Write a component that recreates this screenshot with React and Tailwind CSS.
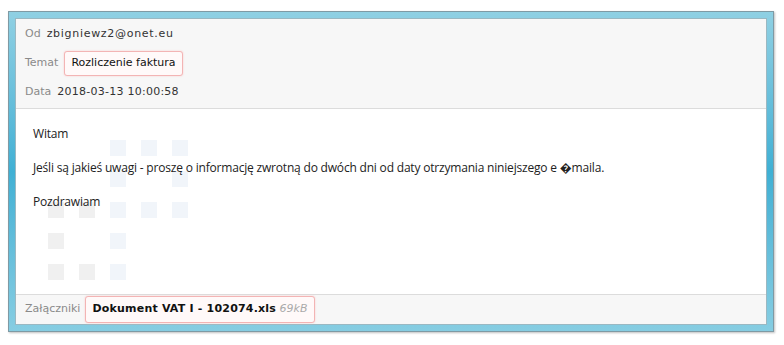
import React from 'react';

const squares = [
  [null, null, 'b', 'b', 'b'],
  [null, null, 'b', null, 'b'],
  ['g', 'g', 'b', 'b', 'b'],
  ['g', null, 'b', null, null],
  ['g', 'g', 'b', null, null],
];

const HeaderRow = ({ label, children }) => (
  <div className="flex h-[29px] items-center gap-[6px] pl-[9px]">
    <span className="text-[#8a8a8a]">{label}</span>
    {children}
  </div>
);

const App = () => {
  return (
    <div className="bg-white w-[784px] h-[345px] pl-[8px] pt-[11px]">
      <div className="w-[766px] h-[321px] border border-[#7f9aa4] bg-gradient-to-b from-[#8fd0e3] via-[#3fb0d4] to-[#86cde2] p-[6px] shadow-[1px_1px_2px_rgba(0,0,0,0.25)]">
        <div className="flex h-full flex-col bg-white font-['DejaVu_Sans',sans-serif] text-[11px] text-[#333] border border-[#9ab8c2]">
          <div className="bg-[#f7f7f7] border-b border-[#dcdcdc] pt-[1px] pb-[1px]">
            <HeaderRow label="Od">
              <span className="tracking-[0.7px]">zbigniewz2@onet.eu</span>
            </HeaderRow>
            <HeaderRow label="Temat">
              <span className="rounded-[3px] border border-[#f3b4b4] bg-[#fff9f9] px-[6px] py-[3px] text-[#111] shadow-[0_0_2px_#f8caca]">
                Rozliczenie faktura
              </span>
            </HeaderRow>
            <HeaderRow label="Data">
              <span className="tracking-[0.25px]">2018-03-13 10:00:58</span>
            </HeaderRow>
          </div>

          <div className="relative flex-1 px-[17px] pt-[16px] font-['Open_Sans',sans-serif] text-[12px] leading-[17px] text-[#222] tracking-[-0.19px]">
            <div className="absolute left-[32px] top-[31px] grid grid-cols-[repeat(5,16px)] gap-[15px]">
              {squares.flat().map((s, i) => (
                <div
                  key={i}
                  className={
                    s === 'g'
                      ? 'h-[16px] w-[16px] bg-[#f0f0f0]'
                      : s === 'b'
                      ? 'h-[16px] w-[16px] bg-[#f1f5fa]'
                      : 'h-[16px] w-[16px]'
                  }
                />
              ))}
            </div>
            <div className="relative space-y-[17px]">
              <p>Witam</p>
              <p>
                Jeśli są jakieś uwagi - proszę o informację zwrotną do dwóch dni od daty otrzymania niniejszego e �maila.
              </p>
              <p>Pozdrawiam</p>
            </div>
          </div>

          <div className="flex h-[30px] items-center gap-[5px] border-t border-[#dcdcdc] bg-[#f7f7f7] pl-[9px]">
            <span className="text-[#8a8a8a]">Załączniki</span>
            <span className="rounded-[3px] border border-[#f3b4b4] bg-[#fff9f9] px-[6px] py-[4px] shadow-[0_0_2px_#f8caca]">
              <span className="font-bold text-[#111] tracking-[0.2px]">Dokument VAT I - 102074.xls</span>{' '}
              <span className="italic text-[#aaa]">69kB</span>
            </span>
          </div>
        </div>
      </div>
    </div>
  );
};

export default App;
